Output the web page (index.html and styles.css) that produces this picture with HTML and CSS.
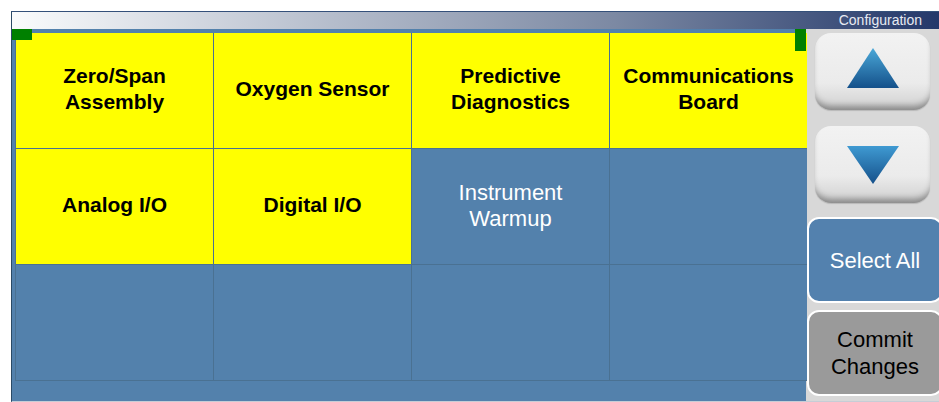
FILE: index.html
```html
<!DOCTYPE html>
<html lang="en">
  <head>
    <meta charset="UTF-8" />
    <title>Configuration</title>
    <link rel="stylesheet" href="styles.css">
  </head>
  <body>
    <div id="screen">
      <div id="titlebar">
        <span class="title">Configuration</span>
      </div>
      <div id="content">
        <div id="main">
          <!-- corner markers -->
          <div class="marker marker-left"></div>
          <div class="marker marker-right"></div>

          <div id="grid">
            <div class="cell on">Zero/Span<br />Assembly</div>
            <div class="cell on">Oxygen Sensor</div>
            <div class="cell on">Predictive<br />Diagnostics</div>
            <div class="cell on">Communications<br />Board</div>
            <div class="cell on">Analog I/O</div>
            <div class="cell on">Digital I/O</div>
            <div class="cell">Instrument<br />Warmup</div>
            <div class="cell"></div>
            <div class="cell"></div>
            <div class="cell"></div>
            <div class="cell"></div>
            <div class="cell"></div>
          </div>
        </div>

        <div id="side">
          <button class="arrow-btn up">
            <svg width="52" height="40" viewBox="0 0 52 40">
              <defs>
                <linearGradient id="gUp" x1="0" y1="0" x2="0" y2="1">
                  <stop offset="0" stop-color="#4aa8d8" />
                  <stop offset="1" stop-color="#14508a" />
                </linearGradient>
              </defs>
              <polygon points="26,0 52,40 0,40" fill="url(#gUp)" />
            </svg>
          </button>
          <button class="arrow-btn down">
            <svg width="52" height="38" viewBox="0 0 52 38">
              <defs>
                <linearGradient id="gDown" x1="0" y1="0" x2="0" y2="1">
                  <stop offset="0" stop-color="#3f9ad2" />
                  <stop offset="1" stop-color="#15508a" />
                </linearGradient>
              </defs>
              <polygon points="0,0 52,0 26,38" fill="url(#gDown)" />
            </svg>
          </button>
          <button class="side-btn select">Select All</button>
          <button class="side-btn commit">Commit<br />Changes</button>
        </div>
      </div>
    </div>
  </body>
</html>
```

FILE: styles.css
```css
body {
  margin: 0;
  background: #ffffff;
  font-family: "Liberation Sans", Arial, sans-serif;
  overflow: hidden;
}
#screen {
  margin: 11px 0 0 11px;
  height: 389px;
  border-top: 1px solid #34507a;
  border-left: 1px solid #2b4a66;
  border-bottom: 2px solid #c6cdd6;
  display: flex;
  flex-direction: column;
}
#titlebar {
  height: 17px;
  background: linear-gradient(to right, #fafbfc, #b4bccb 35%, #7c89a3 65%, #24386a);
  display: flex;
  align-items: center;
  justify-content: flex-end;
  padding-right: 17px;
}
.title {
  color: #e6eaf2;
  font-size: 14px;
  line-height: 17px;
}
#content {
  flex: 1;
  display: flex;
}
#main {
  position: relative;
  width: 794px;
  background: #5381ac;
  padding: 4px 0 0 3px;
  box-sizing: border-box;
}
.marker {
  position: absolute;
  top: 0;
  background: #008000;
}
.marker-left {
  left: 0;
  width: 20px;
  height: 11px;
}
.marker-right {
  right: 0;
  width: 11px;
  height: 22px;
}
#grid {
  display: grid;
  grid-template-columns: repeat(4, 197px);
  grid-template-rows: repeat(3, 115px);
  gap: 1px;
  background: #4a7192;
  border-bottom: 1px solid #4a7192;
  border-left: 1px solid #4a7192;
  width: 791px;
}
.cell {
  background: #5381ac;
  color: #ffffff;
  font-size: 22px;
  line-height: 26px;
  display: flex;
  align-items: center;
  justify-content: center;
  text-align: center;
  padding-bottom: 2px;
}
.cell.on {
  background: #ffff00;
  color: #000000;
  font-size: 21px;
  font-weight: bold;
  padding-bottom: 4px;
}
#side {
  flex: 1;
  background: #d8d8d8;
  display: flex;
  flex-direction: column;
  padding-top: 4px;
}
button {
  font-family: "Liberation Sans", Arial, sans-serif;
  cursor: pointer;
}
.arrow-btn {
  width: 115px;
  height: 77px;
  margin-left: 9px;
  border: none;
  border-radius: 16px;
  background: linear-gradient(to bottom, #f2f2f2, #ebebeb 65%, #cfcfcf);
  box-shadow: inset 0 -7px 6px -3px rgba(0, 0, 0, 0.35), 0 1px 1px rgba(0, 0, 0, 0.15);
  display: flex;
  align-items: center;
  justify-content: center;
  padding: 0;
}
.arrow-btn.up {
  padding-bottom: 8px;
}
.arrow-btn.down {
  margin-top: 16px;
}
.side-btn {
  width: 136px;
  height: 86px;
  margin-left: 1px;
  border: 2px solid #ffffff;
  border-radius: 12px;
  font-size: 22px;
  line-height: 27px;
  padding: 0;
}
.side-btn.select {
  margin-top: 14px;
  background: #5381ae;
  color: #ffffff;
}
.side-btn.commit {
  margin-top: 7px;
  background: #9a9a9a;
  color: #000000;
}
```
